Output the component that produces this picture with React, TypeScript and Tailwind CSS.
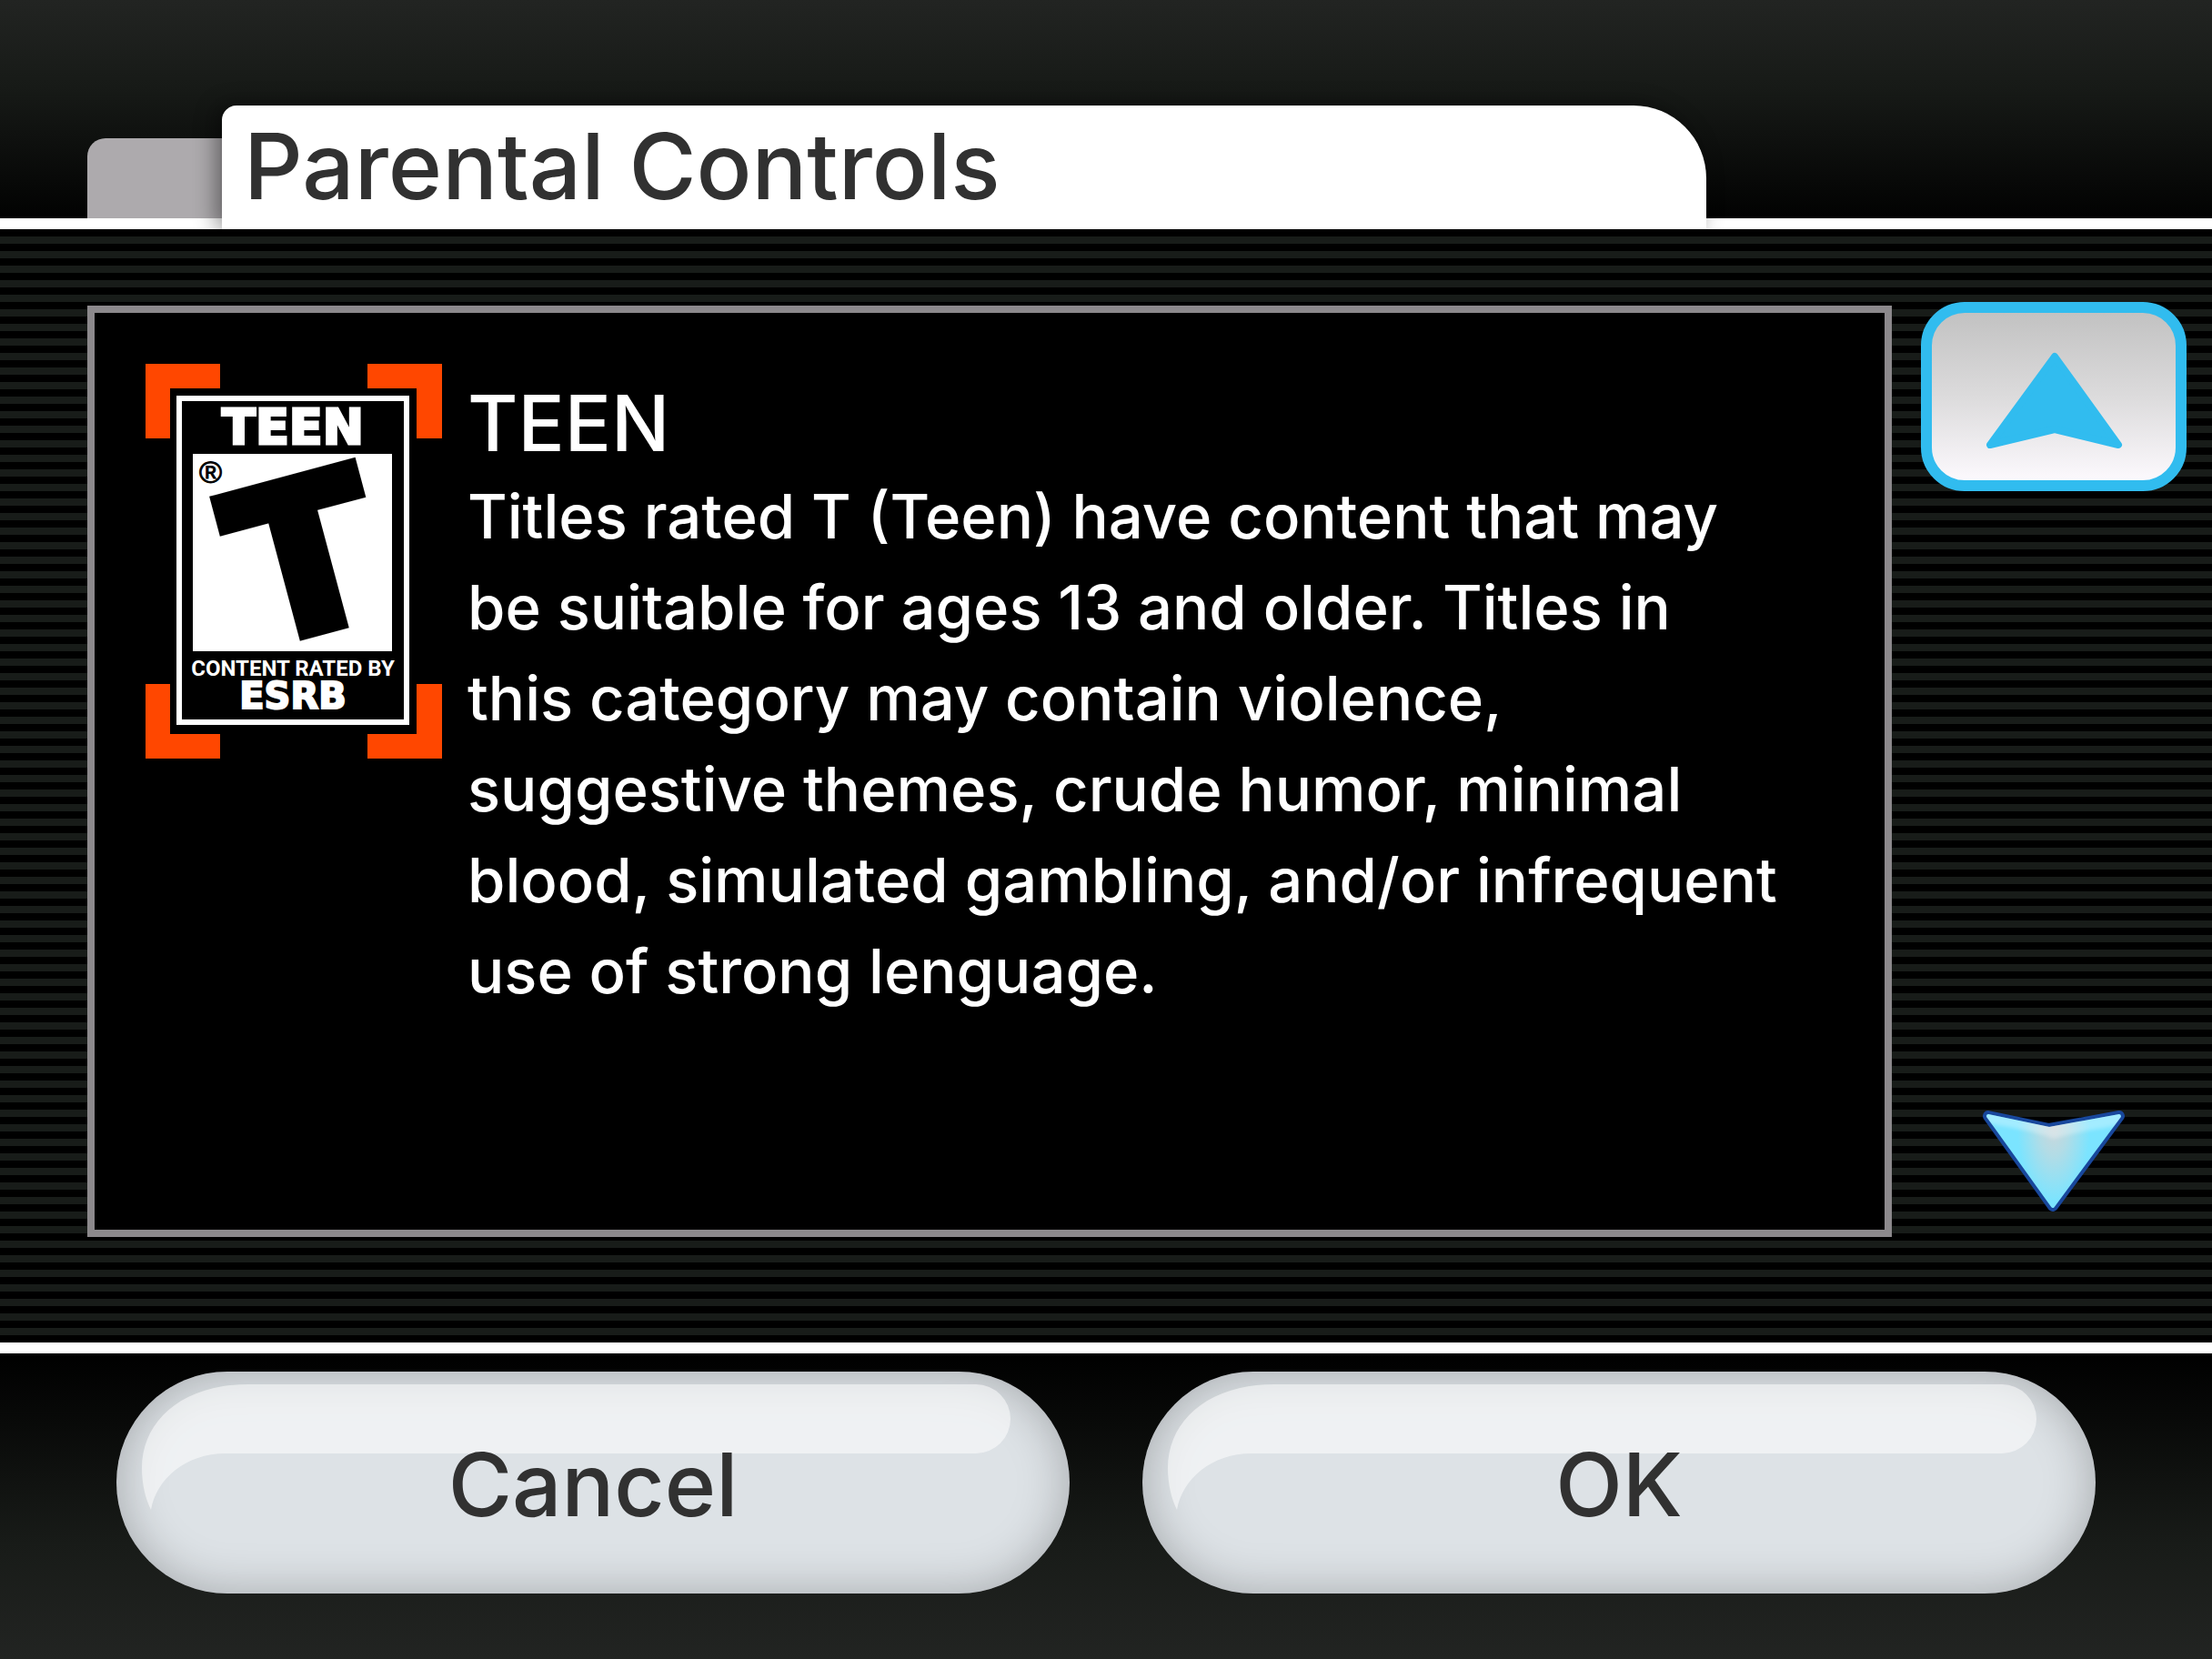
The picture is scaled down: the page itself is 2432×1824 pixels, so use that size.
function EsrbTeenRating() {
  return (
    <svg
      role="img"
      aria-label="ESRB rating: Teen"
      viewBox="0 0 326 434"
      className="h-[434px] w-[326px] shrink-0"
    >
      <g fill="#ff4700">
        <path d="M0 0H82V27H27V82H0Z" />
        <path d="M326 0H244V27H298V82H326Z" />
        <path d="M0 434H82V407H27V352H0Z" />
        <path d="M326 434H244V407H298V352H326Z" />
      </g>
      <rect x="37" y="38" width="250" height="356" fill="#000" stroke="#fff" strokeWidth="6" />
      <rect x="52" y="99" width="219" height="217" fill="#fff" />
      <text
        x="162"
        y="88"
        textAnchor="middle"
        fill="#fff"
        stroke="#fff"
        strokeWidth="3"
        className="font-['DejaVu_Sans'] text-[54px] font-bold"
      >
        TEEN
      </text>
      <text
        x="59"
        y="131"
        fill="#000"
        stroke="#000"
        strokeWidth="1"
        className="font-['Liberation_Sans'] text-[34px]"
      >
        ®
      </text>
      <text
        transform="translate(195 291) rotate(-15)"
        textAnchor="middle"
        fill="#000"
        stroke="#000"
        strokeWidth="13"
        className="font-['DejaVu_Sans'] text-[228px] font-bold"
      >
        T
      </text>
      <text
        x="162"
        y="343"
        textAnchor="middle"
        fill="#fff"
        className="font-['Roboto'] text-[24px] font-bold"
      >
        CONTENT RATED BY
      </text>
      <text
        x="162"
        y="379"
        textAnchor="middle"
        fill="#fff"
        stroke="#fff"
        strokeWidth="2"
        className="font-['DejaVu_Sans'] text-[40px] font-bold"
      >
        ESRB
      </text>
    </svg>
  );
}

function ScrollUpIcon() {
  return (
    <svg aria-hidden="true" viewBox="0 0 152 108" className="h-[108px] w-[152px]">
      <path
        d="M77 6L147 103L77 86L6 103Z"
        fill="#31bcef"
        stroke="#31bcef"
        strokeWidth="8"
        strokeLinejoin="round"
      />
    </svg>
  );
}

function ScrollDownIcon() {
  return (
    <svg aria-hidden="true" viewBox="0 0 156 111" className="h-[111px] w-[156px]">
      <defs>
        <radialGradient
          id="arrow-glow"
          gradientUnits="userSpaceOnUse"
          cx="0"
          cy="0"
          r="1"
          gradientTransform="translate(78 16) scale(40 84)"
        >
          <stop offset="0" stopColor="#cdd6da" />
          <stop offset="0.4" stopColor="#b2dce6" />
          <stop offset="1" stopColor="#7be4ff" />
        </radialGradient>
        <clipPath id="arrow-body">
          <path d="M6 4L73 18L150 4L152 7L79 107L75 107L4 7Z" />
        </clipPath>
        <filter id="arrow-soft" x="-20%" y="-50%" width="140%" height="200%">
          <feGaussianBlur stdDeviation="2" />
        </filter>
      </defs>
      <path
        d="M6 6L73 20L150 6L77 105Z"
        fill="#18479c"
        stroke="#18479c"
        strokeWidth="12"
        strokeLinejoin="round"
      />
      <path
        d="M6 6L73 20L150 6L77 105Z"
        fill="url(#arrow-glow)"
        stroke="url(#arrow-glow)"
        strokeWidth="4"
        strokeLinejoin="round"
      />
      <g clipPath="url(#arrow-body)">
        <path
          d="M0 -6H156V15C130 20 110 22 78 31C60 24 40 20 0 13Z"
          fill="#fff"
          opacity="0.3"
          filter="url(#arrow-soft)"
        />
      </g>
    </svg>
  );
}

function PillButton({ label }: { label: string }) {
  return (
    <button
      type="button"
      className="relative h-[244px] w-full rounded-full bg-[#dde2e6] text-[96px] font-medium text-[#313131] shadow-[inset_0_0_52px_rgba(0,0,0,0.26)]"
    >
      <svg
        aria-hidden="true"
        viewBox="0 0 1048 244"
        preserveAspectRatio="none"
        className="absolute inset-0 h-full w-full"
      >
        <path
          d="M38 152C44 118 76 90 120 90H945A38 38 0 0 0 945 14H145C70 14 28 56 28 106C28 124 32 140 38 152Z"
          fill="#fff"
          fillOpacity="0.53"
        />
      </svg>
      <span className="relative block pt-1">{label}</span>
    </button>
  );
}

export default function App() {
  return (
    <div className="flex min-h-screen flex-col bg-black font-['Inter',sans-serif]">
      <header className="flex h-[252px] items-end border-b-12 border-white bg-[linear-gradient(to_top,#000000,#171a17_62%,#222422)] bg-origin-border pl-24">
        <div className="h-[88px] w-[148px] rounded-tl-[20px] bg-[#adaaad]" />
        <div className="mr-[556px] -mb-3 h-[136px] flex-1 rounded-tl-2xl rounded-tr-[80px] bg-white pt-[14px] pl-6 shadow-[-6px_0_24px_rgba(0,0,0,0.45)]">
          <h1 className="text-[101px] leading-[104px] font-medium whitespace-nowrap text-[#313131]">
            Parental Controls
          </h1>
        </div>
      </header>

      <main className="relative flex flex-1 bg-[repeating-linear-gradient(to_bottom,#000000_0_8px,#181c19_8px_16px)] pt-20 pb-[116px] pl-24">
        <section className="mt-1 flex flex-1 items-start gap-7 border-8 border-[#8c898c] bg-black py-14 pl-14 text-white">
          <EsrbTeenRating />
          <div className="flex-1 pt-[14px]">
            <h2 className="text-[85px] leading-[104px] font-medium">TEEN</h2>
            <p className="text-[67px] leading-[100px] font-medium">
              Titles rated T (Teen) have content that may
              <br />
              be suitable for ages 13 and older. Titles in
              <br />
              this category may contain violence,
              <br />
              suggestive themes, crude humor, minimal
              <br />
              blood, simulated gambling, and/or infrequent
              <br />
              use of strong lenguage.
            </p>
          </div>
        </section>
        <nav
          aria-label="Scroll"
          className="flex w-[352px] flex-col items-center justify-between pr-7 pb-7 pl-8"
        >
          <button
            type="button"
            aria-label="Scroll up"
            className="flex h-[208px] w-full items-center justify-center rounded-[48px] border-12 border-[#31bcef] bg-linear-to-b from-[#c2c2c2] via-[#dcdbdc] to-[#fcf9fd] pt-2"
          >
            <ScrollUpIcon />
          </button>
          <button type="button" aria-label="Scroll down">
            <ScrollDownIcon />
          </button>
        </nav>
      </main>

      <footer className="grid grid-cols-2 gap-20 border-t-12 border-white bg-[linear-gradient(to_bottom,#000000,#181b18_62%,#222422)] px-32 pt-5 pb-18">
        <PillButton label="Cancel" />
        <PillButton label="OK" />
      </footer>
    </div>
  );
}
